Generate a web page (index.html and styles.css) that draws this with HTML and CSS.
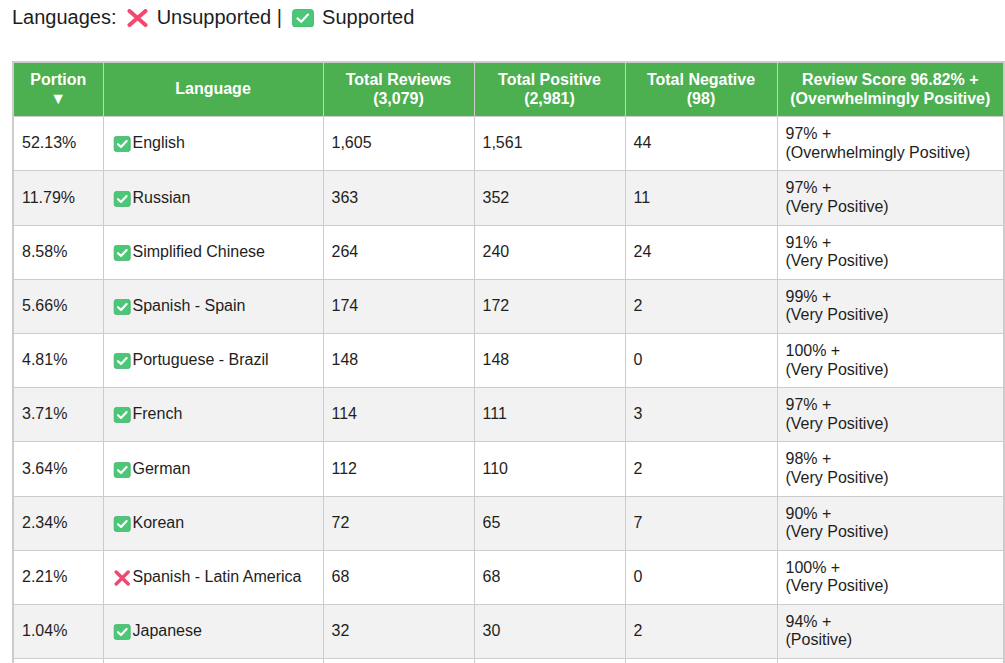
FILE: index.html
```html
<!DOCTYPE html>
<html>
<head>
<meta charset="utf-8">
<link rel="stylesheet" href="styles.css">
</head>
<body>
<p class="legend">Languages: <svg class="ico-lg" viewBox="0 0 29 18"><path d="M7.5 2 L23.5 16 M23.5 2 L7.5 16" class="x"/></svg> Unsupported | <svg class="ico-lg" viewBox="0 0 29 18"><rect x="4.5" y="0.5" width="21" height="17.5" rx="3" class="box"/><path d="M9.5 9.4 L13.2 12.8 L20 5.6" class="chk"/></svg> Supported</p>
<table class="langs">
<colgroup><col class="c1"><col class="c2"><col class="c3"><col class="c4"><col class="c5"><col class="c6"></colgroup>
<thead>
<tr><th>Portion<br>▼</th><th>Language</th><th>Total Reviews<br>(3,079)</th><th>Total Positive<br>(2,981)</th><th>Total Negative<br>(98)</th><th>Review Score 96.82% +<br>(Overwhelmingly Positive)</th></tr>
</thead>
<tbody>
<tr><td>52.13%</td><td><svg class="ico" viewBox="0 0 21 16"><rect x="2.2" y="0.4" width="16" height="15.2" rx="2.4" class="box"/><path d="M6 8.2 L9 10.9 L14.6 5.1" class="chk"/></svg>English</td><td>1,605</td><td>1,561</td><td>44</td><td>97% +<br>(Overwhelmingly Positive)</td></tr>
<tr><td>11.79%</td><td><svg class="ico" viewBox="0 0 21 16"><rect x="2.2" y="0.4" width="16" height="15.2" rx="2.4" class="box"/><path d="M6 8.2 L9 10.9 L14.6 5.1" class="chk"/></svg>Russian</td><td>363</td><td>352</td><td>11</td><td>97% +<br>(Very Positive)</td></tr>
<tr><td>8.58%</td><td><svg class="ico" viewBox="0 0 21 16"><rect x="2.2" y="0.4" width="16" height="15.2" rx="2.4" class="box"/><path d="M6 8.2 L9 10.9 L14.6 5.1" class="chk"/></svg>Simplified Chinese</td><td>264</td><td>240</td><td>24</td><td>91% +<br>(Very Positive)</td></tr>
<tr><td>5.66%</td><td><svg class="ico" viewBox="0 0 21 16"><rect x="2.2" y="0.4" width="16" height="15.2" rx="2.4" class="box"/><path d="M6 8.2 L9 10.9 L14.6 5.1" class="chk"/></svg>Spanish - Spain</td><td>174</td><td>172</td><td>2</td><td>99% +<br>(Very Positive)</td></tr>
<tr><td>4.81%</td><td><svg class="ico" viewBox="0 0 21 16"><rect x="2.2" y="0.4" width="16" height="15.2" rx="2.4" class="box"/><path d="M6 8.2 L9 10.9 L14.6 5.1" class="chk"/></svg>Portuguese - Brazil</td><td>148</td><td>148</td><td>0</td><td>100% +<br>(Very Positive)</td></tr>
<tr><td>3.71%</td><td><svg class="ico" viewBox="0 0 21 16"><rect x="2.2" y="0.4" width="16" height="15.2" rx="2.4" class="box"/><path d="M6 8.2 L9 10.9 L14.6 5.1" class="chk"/></svg>French</td><td>114</td><td>111</td><td>3</td><td>97% +<br>(Very Positive)</td></tr>
<tr><td>3.64%</td><td><svg class="ico" viewBox="0 0 21 16"><rect x="2.2" y="0.4" width="16" height="15.2" rx="2.4" class="box"/><path d="M6 8.2 L9 10.9 L14.6 5.1" class="chk"/></svg>German</td><td>112</td><td>110</td><td>2</td><td>98% +<br>(Very Positive)</td></tr>
<tr><td>2.34%</td><td><svg class="ico" viewBox="0 0 21 16"><rect x="2.2" y="0.4" width="16" height="15.2" rx="2.4" class="box"/><path d="M6 8.2 L9 10.9 L14.6 5.1" class="chk"/></svg>Korean</td><td>72</td><td>65</td><td>7</td><td>90% +<br>(Very Positive)</td></tr>
<tr><td>2.21%</td><td><svg class="ico" viewBox="0 0 21 16"><path d="M4.2 2 L16.2 14 M16.2 2 L4.2 14" class="x xs"/></svg>Spanish - Latin America</td><td>68</td><td>68</td><td>0</td><td>100% +<br>(Very Positive)</td></tr>
<tr><td>1.04%</td><td><svg class="ico" viewBox="0 0 21 16"><rect x="2.2" y="0.4" width="16" height="15.2" rx="2.4" class="box"/><path d="M6 8.2 L9 10.9 L14.6 5.1" class="chk"/></svg>Japanese</td><td>32</td><td>30</td><td>2</td><td>94% +<br>(Positive)</td></tr>
<tr class="blank"><td></td><td></td><td></td><td></td><td></td><td></td></tr>
</tbody>
</table>
</body>
</html>
```

FILE: styles.css
```css
html, body {
  margin: 0;
  padding: 0;
  background: #fff;
}
body {
  font-family: "Liberation Sans", Arial, sans-serif;
  color: #1e1e1e;
  padding: 0 2px 0 12px;
}
.legend {
  margin: 0;
  padding-top: 6px;
  font-size: 20px;
  line-height: 23px;
  height: 55px;
}
.ico-lg {
  width: 29px;
  height: 18px;
  vertical-align: -3px;
}
.ico {
  width: 21px;
  height: 16px;
  vertical-align: -4px;
}
.x {
  stroke: #f2476f;
  stroke-width: 4;
  stroke-linecap: round;
  fill: none;
}
.xs {
  stroke-width: 3.4;
}
.box {
  fill: #4cc677;
  stroke: #3fb068;
  stroke-width: 0.8;
}
.chk {
  stroke: #fff;
  stroke-width: 2.2;
  stroke-linecap: round;
  stroke-linejoin: round;
  fill: none;
}
.langs {
  border-collapse: collapse;
  table-layout: fixed;
  width: 991px;
  border: 2px solid #ccc;
  font-size: 16px;
}
.c1 { width: 90px; }
.c2 { width: 220px; }
.c3 { width: 151px; }
.c4 { width: 151px; }
.c5 { width: 152px; }
.c6 { width: 227px; }
.langs th, .langs td {
  border: 1px solid #ccc;
  padding: 8px;
  line-height: 18.6px;
}
.langs th {
  background: #4caf50;
  color: #fff;
  font-weight: bold;
  text-align: center;
}
.langs td {
  text-align: left;
}
.langs tbody tr:nth-child(even) td {
  background: #f2f2f2;
}
.langs .blank td {
  height: 37px;
}
```
